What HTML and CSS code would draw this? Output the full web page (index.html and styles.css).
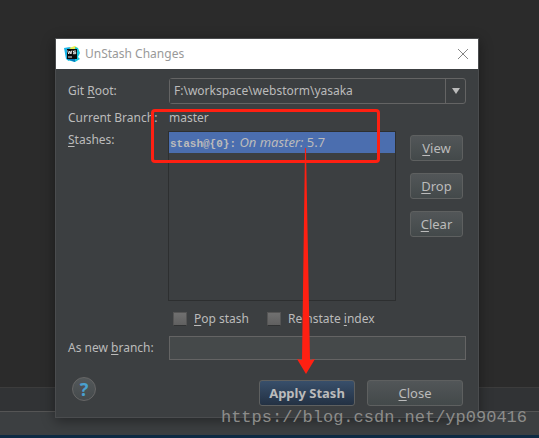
FILE: index.html
```html
<!DOCTYPE html>
<html lang="en">
<head>
<meta charset="utf-8">
<title>UnStash Changes</title>
<link rel="stylesheet" href="styles.css">
</head>
<body>
<div class="editor"></div>
<div class="tool-strip"></div>
<div class="status-bar"></div>
<div class="taskbar"></div>

<main class="dialog" role="dialog" aria-labelledby="dialog-title">
  <header class="titlebar">
    <svg class="logo" viewBox="0 0 16 16" aria-hidden="true">
      <path d="M0 2 6 1 9 3 5 15 2 13Z" fill="#19b4e8"/>
      <path d="M5 2 11 0 14 2 12 6Z" fill="#e9ec4d"/>
      <path d="M11 1 14 2 16 7 14 11 16 13 11 16 3 14 11 10Z" fill="#13c5dc"/>
      <path d="M3 13 11 12 11 16Z" fill="#0879be"/>
      <rect x="3" y="3" width="10" height="10" fill="#0a0a0a"/>
      <path d="M3.700 4.500 4.700 8 5.800 5 6.900 8 7.900 4.500M12 5H9.500V6.300H11.700V7.700H9M4 11H8" fill="none" stroke="#fff" stroke-width=".9"/>
    </svg>
    <h1 id="dialog-title">UnStash Changes</h1>
    <button class="dismiss" type="button" aria-label="Close dialog">
      <svg viewBox="0 0 12 12" aria-hidden="true"><path d="M1 1 11 11M11 1 1 11" fill="none" stroke="#858585"/></svg>
    </button>
  </header>
  <form class="content">
    <div class="row root-row">
      <label for="root">Git <u>R</u>oot:</label>
      <div class="combo">
        <select id="root"><option>F:\workspace\webstorm\yasaka</option></select>
        <span class="combo-arrow" aria-hidden="true"><svg viewBox="0 0 8 6"><path d="M0 0H8L4 6Z" fill="#bbb"/></svg></span>
      </div>
    </div>
    <div class="row branch-row">
      <span>Current Branch:</span>
      <span>master</span>
    </div>
    <div class="row stash-row">
      <span class="stash-label" id="stashes"><u>S</u>tashes:</span>
      <ul class="stashes" role="listbox" aria-labelledby="stashes">
        <li role="option" aria-selected="true"><b>stash@{0}:</b> <i>On master:</i> 5.7</li>
      </ul>
      <div class="side-buttons">
        <button class="button" type="button"><u>V</u>iew</button>
        <button class="button" type="button"><u>D</u>rop</button>
        <button class="button" type="button"><u>C</u>lear</button>
      </div>
    </div>
    <div class="checks">
      <label><input type="checkbox"><span><u>P</u>op stash</span></label>
      <label><input type="checkbox"><span>Reinstate <u>i</u>ndex</span></label>
    </div>
    <div class="row">
      <label for="branch">As new <u>b</u>ranch:</label>
      <input class="field" id="branch" type="text">
    </div>
    <footer class="actions">
      <button class="help" type="button" aria-label="Help">?</button>
      <button class="button primary" type="button">Apply Stash</button>
      <button class="button" type="button"><u>C</u>lose</button>
    </footer>
  </form>
  <div class="highlight"></div>
  <svg class="arrow" viewBox="0 0 18 226" aria-hidden="true"><path d="M8 0H9L13 212 18 211 9 226 0 211 5 212Z" fill="#ff2012"/></svg>
</main>
<div class="watermark">https://blog.csdn.net/yp090416</div>
</body>
</html>
```
FILE: styles.css
```css
* { box-sizing: border-box; }
body {
  margin: 0;
  min-height: 100vh;
  display: flex;
  flex-direction: column;
  position: relative;
  background: #2b2b2b;
  color: #bbb;
  font: 12px/18px "Noto Sans", sans-serif;
}
button, input, select { font: inherit; color: inherit; }
u { text-decoration-thickness: 1px; text-underline-offset: 2px; }

.editor { flex: 1; }
.tool-strip { height: 24px; background: #313335; border-top: 1px solid #3c3c3c; }
.status-bar { height: 24px; background: #3c3f41; border-top: 1px solid #555; }
.taskbar { height: 3px; background: #0d2a43; }

.dialog {
  position: absolute;
  top: 38px;
  left: 55px;
  right: 60px;
  background: #3c3f41;
  border: 1px solid #4a4c4e;
  box-shadow: 0 3px 12px rgba(0, 0, 0, .4);
}
.titlebar {
  display: flex;
  align-items: center;
  height: 30px;
  padding: 0 9px 0 8px;
  gap: 5px;
  background: #fff;
  color: #999;
}
.logo { width: 16px; height: 16px; }
.titlebar h1 { flex: 1; margin: 0; font-size: 12px; font-weight: 400; }
.dismiss { display: flex; padding: 0; border: 0; background: none; }
.dismiss svg { width: 12px; height: 12px; }

.content { padding: 9px 12px 11px; }
.row { display: grid; grid-template-columns: 101px 1fr; align-items: center; }
.combo {
  display: flex;
  height: 26px;
  border: 1px solid #646464;
  border-radius: 3px;
}
.combo select {
  flex: 1;
  min-width: 0;
  padding: 0 4px;
  border: 0;
  background: #3c3f41;
  appearance: none;
}
.combo-arrow {
  display: grid;
  place-items: center;
  width: 20px;
  border-left: 1px solid #646464;
}
.combo-arrow svg { width: 8px; height: 6px; }
.branch-row { margin-top: 5px; }
.stash-row {
  grid-template-columns: 100px 1fr 53px;
  align-items: start;
  margin: 4px 3px 0 0;
}
.stashes {
  height: 170px;
  margin: 0 14px 0 0;
  padding: 0;
  border: 1px solid #2d2f30;
  list-style: none;
}
.stashes li {
  height: 21px;
  padding: 1px;
  background: #4b6eaf;
  font-size: 13px;
  white-space: nowrap;
}
.stashes b { font: bold 11px/18px "Liberation Mono", monospace; }
.side-buttons { display: grid; gap: 12px; padding-top: 4px; }
.button {
  height: 26px;
  padding: 0;
  border: 1px solid #5e6060;
  border-radius: 3px;
  background: linear-gradient(#525658, #43494a);
  font-size: 13px;
}
.checks { display: flex; gap: 18px; padding: 9px 0 8px 105px; }
.checks label { display: flex; align-items: center; gap: 7px; }
.checks input {
  width: 14px;
  height: 14px;
  margin: 0;
  border: 1px solid #555;
  border-bottom-color: #303233;
  background: linear-gradient(#707070, #606060);
  appearance: none;
}
.field {
  width: 100%;
  height: 24px;
  padding: 0 4px;
  border: 1px solid #646464;
  background: #45494a;
}
.actions {
  display: grid;
  grid-template-columns: 1fr 96px 96px;
  column-gap: 12px;
  align-items: end;
  margin-top: 17px;
  padding: 0 3px 0 4px;
}
.actions .button { margin-top: 3px; }
.help {
  align-self: start;
  width: 24px;
  height: 24px;
  padding: 0;
  border: 1px solid #666;
  border-radius: 50%;
  background: linear-gradient(#53585a, #454a4c);
  color: #4aa0cf;
  font: bold 18px/22px "Noto Sans", sans-serif;
}
.primary {
  font-weight: 700;
  background: linear-gradient(#384f6b, #233143);
}

.highlight {
  position: absolute;
  top: 70px;
  left: 95px;
  width: 229px;
  height: 54px;
  border: 3px solid #ff2012;
  border-radius: 4px;
}
.arrow { position: absolute; top: 109px; left: 241px; width: 18px; height: 226px; }
.watermark {
  position: absolute;
  right: 12px;
  bottom: 10px;
  color: #8c8c8a;
  font: 17px/20px "Liberation Mono", monospace;
}
```
